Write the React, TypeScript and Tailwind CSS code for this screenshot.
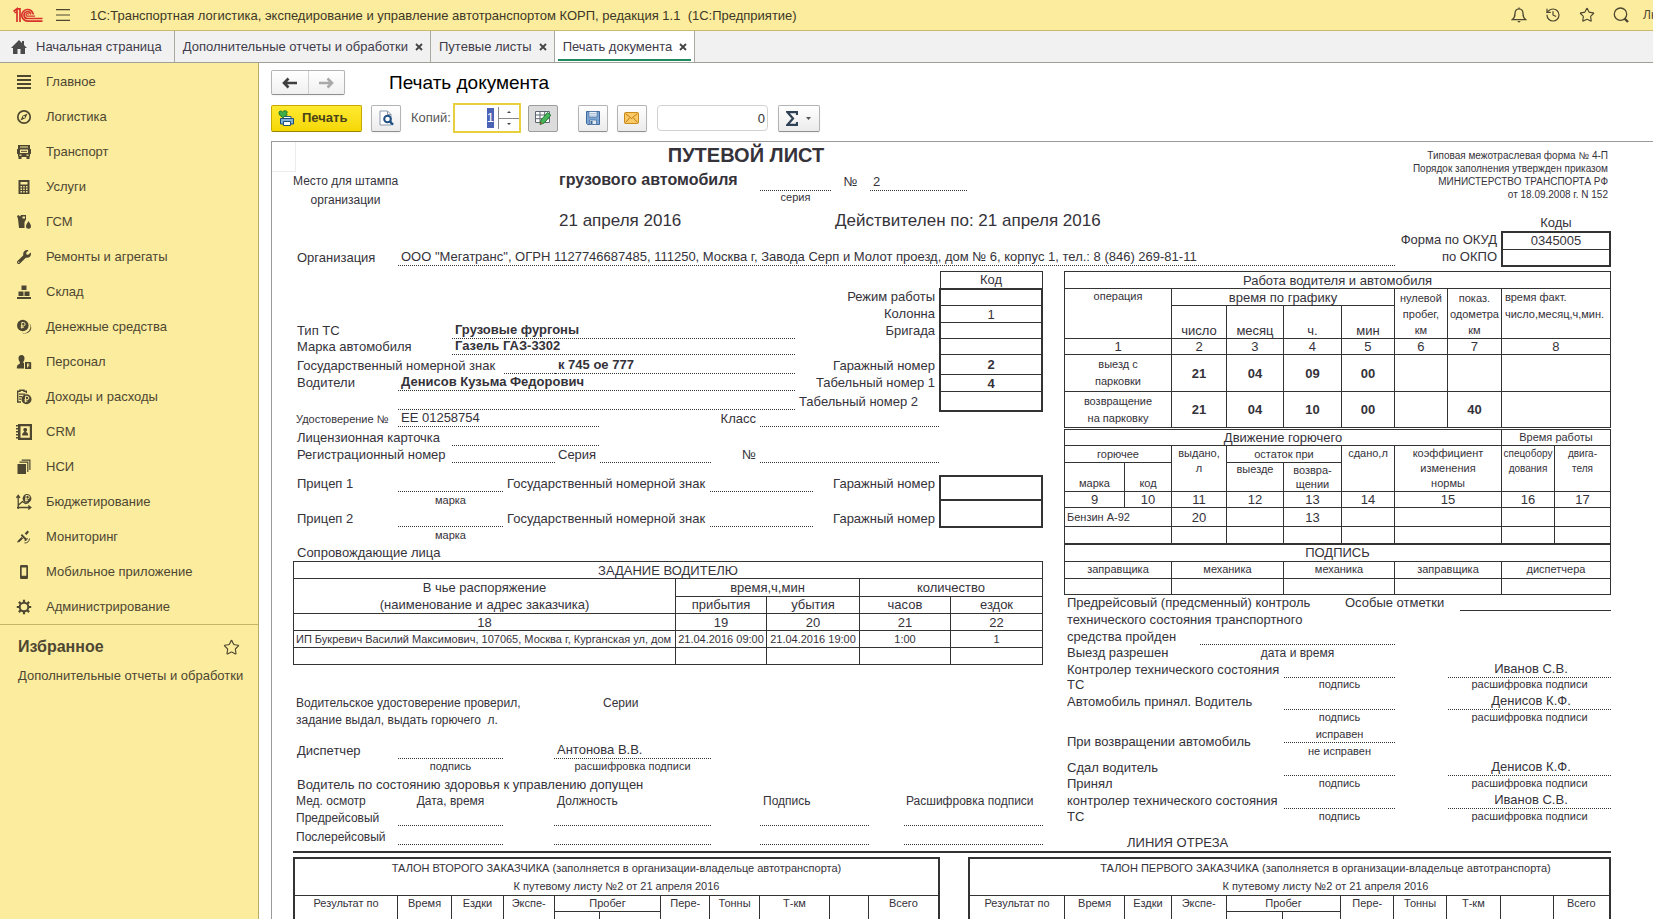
import type { ReactNode } from 'react'
import clsx from 'clsx'
import { History, Star } from 'lucide-react'
import { FaWrench } from 'react-icons/fa'

const INK = '#4d4732'

/* ---------- icons ---------- */

function Glyph({ children }: { children: ReactNode }) {
	return (
		<svg
			className="size-4 shrink-0"
			viewBox="0 0 16 16"
			fill={INK}
			stroke="none"
			aria-hidden
		>
			{children}
		</svg>
	)
}

function Ruble({ x, y, color = '#fcec9e' }: { x: number; y: number; color?: string }) {
	return (
		<path
			d={`M${x - 1} ${y + 3}v-6h1.6a1.6 1.6 0 0 1 0 3.4h-2.6M${x - 2} ${y + 1.8}h3`}
			fill="none"
			stroke={color}
			strokeWidth="1"
		/>
	)
}

const icons = {
	main: (
		<Glyph>
			<path d="M1 1h14v2H1zM1 5h14v2H1zM1 9h14v2H1zM1 13h14v2H1z" />
		</Glyph>
	),
	compass: (
		<Glyph>
			<circle cx="8" cy="8" r="6.2" fill="none" stroke={INK} strokeWidth="1.7" />
			<path d="M11.6 4.4 9.4 9.2 4.4 11.6 6.6 6.8z" />
			<circle cx="8" cy="8" r="1" fill="#fcec9e" />
		</Glyph>
	),
	truck: (
		<Glyph>
			<path
				fillRule="evenodd"
				d="M2 1h12v4h1v5h-1v2.500h-.500V15h-3v-2h-5v2h-3v-2.500H2V10H1V5h1zm2 1.500v1h8v-1zm0 3v3.500h8V5.500zm-.500 5v1.200h2v-1.200zm7 0v1.200h2v-1.200z"
			/>
			<path d="M5 6.800h6v1H5z" />
		</Glyph>
	),
	calc: (
		<Glyph>
			<path
				fillRule="evenodd"
				d="M2.500 1h11v14h-11zm2 2v2.500h7V3zm0 4v1.400H6V7zm2.700 0v1.400h1.500V7zM10 7v1.400h1.500V7zM4.500 9.500v1.400H6V9.500zm2.700 0v1.400h1.500V9.500zm2.800 0v1.400h1.500V9.500zM4.500 12v1.400H6V12zm2.700 0v1.400h1.500V12zm2.800 0v1.400h1.500V12z"
			/>
		</Glyph>
	),
	fuel: (
		<Glyph>
			<path
				fillRule="evenodd"
				d="M1 2l1.500-1L4 2.500 5 1h5v4.500L8.500 8v6H3L2 5zm5.500.500v2H9v-2z"
			/>
			<path d="M12.500 7c1.500 2.500 2.500 3.800 2.500 5.200A2.400 2.400 0 0 1 10 12.200C10 10.800 11 9.500 12.500 7z" />
		</Glyph>
	),
	wrench: <FaWrench className="size-4 shrink-0 p-px text-[#4d4732]" />,
	boxes: (
		<Glyph>
			<path d="M5.500 1.500h5v4.500h-5zM2.500 7.500h5v4.500h-5zM8.500 7.500h5v4.500h-5zM1 13h14v2H1z" />
		</Glyph>
	),
	coins: (
		<Glyph>
			<circle cx="6.800" cy="6.500" r="5.800" />
			<Ruble x={6.8} y={6.5} />
			<path d="M13.500 4.500a6.300 6.300 0 0 1-7.500 9.200c4 2.500 9.500-.700 9.200-5.200-.100-1.600-.700-3-1.700-4z" />
		</Glyph>
	),
	staff: (
		<Glyph>
			<path d="M5.500 1C7.500 1 8.600 2.300 8.500 4.500 8.400 6 8 7 7.300 7.800V9H8v5.500H.800c0-3 .700-4 3-4.800V7.800C3 7 2.600 6 2.500 4.500 2.400 2.300 3.500 1 5.500 1z" />
			<path
				fillRule="evenodd"
				d="M9 8h5.500l.700.700v6.300H9zm2 1.500v4h.9v-1.200h1.300V9.500zm.9.800h.6v1.200h-.6z"
			/>
		</Glyph>
	),
	income: (
		<Glyph>
			<path
				d="M5 13H1.700V2.200H4V1.200h4v1h2.300v2"
				fill="none"
				stroke={INK}
				strokeWidth="1.400"
			/>
			<path d="M3 4.500h6v1.200H3zM3 7h3v1.200H3zM3 9.500h2v1.200H3z" />
			<circle cx="10.500" cy="10.300" r="5" />
			<Ruble x={10.5} y={10.3} />
		</Glyph>
	),
	crm: (
		<Glyph>
			<path
				fillRule="evenodd"
				d="M2 0h14v16H2v-1.500H0V13h2v-1.500H0V10h2V8.500H0V7h2V5.500H0V4h2V2.500H0V1h2zm2.500 2.200v11.600h9.300V2.200z"
			/>
			<path d="M9.200 4a1.700 1.700 0 0 1 1 3.200v1c1.400.300 1.900 1 1.900 3.300H6.200c0-2.300.500-3 2-3.300v-1a1.700 1.700 0 0 1 1-3.200z" />
		</Glyph>
	),
	pages: (
		<Glyph>
			<path d="M1.500 5h8.500v10H1.500z" />
			<path d="M3.500 3.200h8.300V13M5.700 1.200h8.200V11" fill="none" stroke={INK} strokeWidth="1.200" />
		</Glyph>
	),
	budget: (
		<Glyph>
			<path
				d="M2.200 15V1.500M.400 3.800 2.200 1.300 4 3.800M1 13.500h13.500M12.300 11.600l2.500 1.900-2.500 1.900M2.500 11l4-3.500 3 2 3.500-1"
				fill="none"
				stroke={INK}
				strokeWidth="1.300"
			/>
			<circle cx="11" cy="4.500" r="4.400" />
			<Ruble x={11} y={4.5} />
		</Glyph>
	),
	satellite: (
		<Glyph>
			<path d="M11.500 1.500 13 3 10.500 6 8.700 4.500zM6 5l5 5-1.500 1.500L4.700 6.500zM2 11.500 5.500 8 7 9.500 3.500 13 1 13.500z" />
			<path
				d="M8.500 14a5 5 0 0 0 5-4.500M8.500 11.800A3 3 0 0 0 11.400 9"
				fill="none"
				stroke={INK}
			/>
		</Glyph>
	),
	phone: (
		<Glyph>
			<path
				fillRule="evenodd"
				d="M5.500 1h5c1 0 1.500.500 1.500 1.500v11c0 1-.500 1.500-1.500 1.500h-5C4.500 15 4 14.500 4 13.500v-11C4 1.500 4.500 1 5.500 1zm.200 2.500v8.300h4.600V3.500z"
			/>
		</Glyph>
	),
	gear: (
		<Glyph>
			<circle cx="8" cy="8" r="4.300" fill="none" stroke={INK} strokeWidth="2" />
			<path
				d="M8 .800v3M8 12.200v3M.800 8h3M12.200 8h3M2.900 2.900 5 5M11 11l2.100 2.100M13.100 2.900 11 5M5 11l-2.100 2.100"
				stroke={INK}
				strokeWidth="2.200"
			/>
		</Glyph>
	),
}

function Logo() {
	return (
		<svg
			className="h-4 w-[30px]"
			viewBox="0 0 30 16"
			fill="none"
			stroke="#d8322b"
			strokeWidth="1.700"
			role="img"
			aria-label="1С"
		>
			<path d="M.500 4.500 4 1.800V15M3.600 1.800h3.400V15M1.500 5.500h2" />
			<path d="M20.300 7.500A5.800 5.800 0 1 0 14.500 14.100H29.500" />
			<path d="M17.800 7.500A3.400 3.400 0 1 0 14.500 11.500H29.500" />
			<path d="M15.600 7.600a1.300 1.300 0 1 0-1 1.500H22" strokeWidth="1.200" />
		</svg>
	)
}

function MenuIcon() {
	return (
		<svg className="h-3 w-[14px]" viewBox="0 0 14 12" stroke="currentColor" strokeWidth="1.200" aria-hidden>
			<path d="M0 .600h14M0 6h14M0 11.400h14" />
		</svg>
	)
}

function BellIcon() {
	return (
		<svg className="size-4" viewBox="0 0 16 16" fill="none" stroke="currentColor" strokeWidth="1.300" aria-hidden>
			<path d="M8 1.800c-2.600 0-4 2-4 4.700 0 3-.800 4.800-2.800 6.200h13.600C12.800 11.300 12 9.500 12 6.500c0-2.700-1.400-4.700-4-4.700zM8 .500v1.300" />
			<path d="M6.200 14h3.600L8 15.700z" fill="currentColor" stroke="none" />
		</svg>
	)
}

function SearchIcon() {
	return (
		<svg className="size-4" viewBox="0 0 16 16" fill="none" stroke="currentColor" strokeWidth="1.300" aria-hidden>
			<circle cx="7.500" cy="7.200" r="6.200" />
			<path d="m11.500 11.500 3.500 3.500" strokeWidth="2.400" />
		</svg>
	)
}

function HomeIcon() {
	return (
		<svg className="h-[14px] w-4" viewBox="0 0 16 14" fill="#4a4a4a" aria-hidden>
			<path d="M8 0l3 3V1h2v4l3 3h-2v6h-4.500V9h-3v5H2V8H0z" />
		</svg>
	)
}

function Arrow({ color, flip }: { color: string; flip?: boolean }) {
	return (
		<svg
			className={clsx('h-3 w-[15px]', flip && '-scale-x-100')}
			viewBox="0 0 15 12"
			fill="none"
			stroke={color}
			strokeWidth="2.600"
			aria-hidden
		>
			<path d="M2 6h13M6.500 1.500 2 6l4.500 4.500" />
		</svg>
	)
}

function PrinterIcon() {
	return (
		<svg className="size-4" viewBox="0 0 16 16" aria-hidden>
			<path d="M5 6.500h8v3H5z" fill="#fff" stroke="#2b5d85" />
			<path d="M2.500 8.500h13V14h-13z" fill="#7fb2d6" stroke="#1f4e79" />
			<path d="M5.500 11.500h7v4h-7z" fill="#fff" stroke="#1f4e79" />
			<path
				d="M1 2.500C1 .800 3.500.500 4.500 2 5.500.300 8.500.500 9.500 2.200L8 3.500l1.300 1.200L5 7.500 1.500 5z"
				fill="#3fae49"
				stroke="#1d7a2b"
			/>
		</svg>
	)
}

function PreviewIcon() {
	return (
		<svg className="size-4" viewBox="0 0 16 16" fill="none" aria-hidden>
			<path d="M2 1h7.500L13 4.500V15H2z" fill="#fff" stroke="#8a99a8" />
			<path d="M9.500 1v3.500H13" stroke="#8a99a8" />
			<circle cx="9.500" cy="9" r="3.300" fill="#fff" stroke="#1f4e82" strokeWidth="2" />
			<path d="m12 11.500 3 3.300" stroke="#1f4e82" strokeWidth="2.400" />
		</svg>
	)
}

function EditTableIcon() {
	return (
		<svg className="size-[18px]" viewBox="0 0 18 18" fill="none" aria-hidden>
			<path d="M1.500 2.500h14v11h-14zM1.500 6h14M1.500 9.700h14M6 2.500v11M10.700 2.500v11" fill="#fff" stroke="#5c6670" />
			<path d="M6 15.500 7 11l6.500-7.500 3.300 2.700-6.500 7.700z" fill="#47b65a" stroke="#247a35" />
			<path d="m6 15.500.700-2.500 2 1.500z" fill="#a0522d" />
		</svg>
	)
}

function SaveIcon() {
	return (
		<svg className="size-4" viewBox="0 0 16 16" aria-hidden>
			<path d="M1.500 1.500h13v13h-12l-1-1z" fill="#7ba6d3" stroke="#41689a" />
			<path d="M4 1.500h8v5.500H4z" fill="#eef4fa" stroke="#41689a" strokeWidth=".700" />
			<path d="M4.500 10h7v4.500h-7z" fill="#dfe9f3" stroke="#41689a" strokeWidth=".700" />
			<path d="M5.500 11h2v3h-2z" fill="#41689a" />
			<path d="M5 3.500h6M5 5.200h6" stroke="#9bb6d4" strokeWidth=".800" />
		</svg>
	)
}

function MailIcon() {
	return (
		<svg className="h-3 w-[15px]" viewBox="0 0 15 12" aria-hidden>
			<rect x=".500" y=".500" width="14" height="11" rx="1" fill="#fbc965" stroke="#c98a1b" />
			<path d="m1.500 1.500 6 5 6-5M1.500 10.500l4-4.500M13.500 10.500l-4-4.500" fill="none" stroke="#b97a14" />
		</svg>
	)
}

/* ---------- application chrome ---------- */

const sections = [
	{ icon: icons.main, label: 'Главное' },
	{ icon: icons.compass, label: 'Логистика' },
	{ icon: icons.truck, label: 'Транспорт' },
	{ icon: icons.calc, label: 'Услуги' },
	{ icon: icons.fuel, label: 'ГСМ' },
	{ icon: icons.wrench, label: 'Ремонты и агрегаты' },
	{ icon: icons.boxes, label: 'Склад' },
	{ icon: icons.coins, label: 'Денежные средства' },
	{ icon: icons.staff, label: 'Персонал' },
	{ icon: icons.income, label: 'Доходы и расходы' },
	{ icon: icons.crm, label: 'CRM' },
	{ icon: icons.pages, label: 'НСИ' },
	{ icon: icons.budget, label: 'Бюджетирование' },
	{ icon: icons.satellite, label: 'Мониторинг' },
	{ icon: icons.phone, label: 'Мобильное приложение' },
	{ icon: icons.gear, label: 'Администрирование' },
]

function TitleBar() {
	return (
		<header className="flex h-[31px] shrink-0 items-center overflow-hidden border-b border-[#c9b96c] bg-[#fcec9e] pl-[13px] whitespace-nowrap text-[#4d4732]">
			<Logo />
			<button type="button" aria-label="Меню" className="ml-[13px]">
				<MenuIcon />
			</button>
			<h1 className="ml-5 pt-px text-[13px] whitespace-pre text-[#3d3926]">
				1С:Транспортная логистика, экспедирование и управление автотранспортом КОРП,
				редакция 1.1{'  '}(1С:Предприятие)
			</h1>
			<div className="ml-auto flex items-center gap-[18px]">
				<button type="button" aria-label="Оповещения">
					<BellIcon />
				</button>
				<button type="button" aria-label="История">
					<History className="size-4" strokeWidth={1.8} />
				</button>
				<button type="button" aria-label="Избранное">
					<Star className="size-4" strokeWidth={1.7} />
				</button>
				<button type="button" aria-label="Поиск">
					<SearchIcon />
				</button>
			</div>
			<span className="ml-[14px] w-[10px] text-xs">Лю</span>
		</header>
	)
}

function Tab({ label, active }: { label: string; active?: boolean }) {
	return (
		<div
			className={clsx(
				'flex border-r border-[#a9a9a0] px-[3px] pb-px',
				active && 'bg-white',
			)}
		>
			<div
				className={clsx(
					'flex items-center gap-[7px] border-b-2 pt-[3px] pr-1 pl-[5px]',
					active ? 'border-[#1f8a5f]' : 'border-transparent',
				)}
			>
				<button type="button">{label}</button>
				<button type="button" aria-label={`Закрыть ${label}`}>
					<svg className="size-2" viewBox="0 0 8 8" stroke="#444" strokeWidth="1.800" aria-hidden>
						<path d="m1 1 6 6M7 1 1 7" />
					</svg>
				</button>
			</div>
		</div>
	)
}

function Tabs() {
	return (
		<nav className="flex h-8 shrink-0 border-b border-[#a0a098] bg-[#f1f1f1] text-[13px] whitespace-nowrap text-[#403b4a]">
			<a href="#home" className="flex items-center gap-[9px] border-r border-[#a9a9a0] pr-3 pl-[11px]">
				<HomeIcon />
				Начальная страница
			</a>
			<Tab label="Дополнительные отчеты и обработки" />
			<Tab label="Путевые листы" />
			<Tab label="Печать документа" active />
		</nav>
	)
}

function Sidebar() {
	return (
		<aside className="w-[259px] shrink-0 border-r border-[#b8ac66] bg-[#fcec9e] text-[13px] text-[#4d4732]">
			<ul className="border-b border-[#c4b564] pt-px">
				{sections.map(({ icon, label }) => (
					<li key={label}>
						<a href="#section" className="flex h-[35px] items-center gap-[14px] pl-4">
							{icon}
							{label}
						</a>
					</li>
				))}
			</ul>
			<div className="flex items-center justify-between pt-[10px] pr-[18px] pl-[18px]">
				<h2 className="text-base font-bold">Избранное</h2>
				<Star className="size-[17px]" strokeWidth={1.6} />
			</div>
			<a href="#favorite" className="block pt-[7px] pl-[18px] whitespace-nowrap">
				Дополнительные отчеты и обработки
			</a>
		</aside>
	)
}

const buttonClass =
	'flex h-[27px] w-[30px] items-center justify-center rounded-xs border border-[#b4b4b4] border-b-[#8e8e8e] bg-linear-to-b from-white to-[#ebebeb] shadow-xs'

function Toolbar() {
	return (
		<div className="mt-2 flex h-[30px] items-center text-[13px] whitespace-nowrap">
			<button
				type="button"
				className="flex h-[27px] w-[91px] items-center gap-2 rounded-xs border border-[#c5a800] border-b-[#9a8400] bg-linear-to-b from-[#ffe92e] to-[#f5d800] pl-1.5 font-bold text-[#4a4318]"
			>
				<PrinterIcon />
				Печать
			</button>
			<button type="button" aria-label="Предварительный просмотр" className={clsx(buttonClass, 'ml-[9px]')}>
				<PreviewIcon />
			</button>
			<label htmlFor="copies" className="ml-[10px] text-[#555]">
				Копий:
			</label>
			<div className="ml-[2px] flex h-[30px] w-[68px] border-2 border-[#e8cf3e] bg-white">
				<input
					id="copies"
					autoFocus
					defaultValue="1"
					onFocus={(e) => e.target.select()}
					className="min-w-0 flex-1 pr-1 text-right text-[#333] outline-none selection:bg-[#4c62b4] selection:text-white"
				/>
				<div className="my-[2px] flex w-[21px] flex-col border-l border-[#888]">
					<button type="button" aria-label="Больше" className="flex flex-1 items-center justify-center border-b border-[#888]">
						<svg className="h-[2px] w-1" viewBox="0 0 4 2" fill="#444" aria-hidden>
							<path d="M2 0l2 2H0z" />
						</svg>
					</button>
					<button type="button" aria-label="Меньше" className="flex flex-1 items-center justify-center">
						<svg className="h-[2px] w-1" viewBox="0 0 4 2" fill="#444" aria-hidden>
							<path d="M2 2l2-2H0z" />
						</svg>
					</button>
				</div>
			</div>
			<button
				type="button"
				aria-pressed
				aria-label="Редактирование"
				className="ml-[7px] flex h-[27px] w-[30px] items-center justify-center rounded-xs border border-[#9c9c9c] bg-[#dcdcdc]"
			>
				<EditTableIcon />
			</button>
			<button type="button" aria-label="Сохранить" className={clsx(buttonClass, 'ml-5')}>
				<SaveIcon />
			</button>
			<button type="button" aria-label="Отправить по почте" className={clsx(buttonClass, 'ml-[9px]')}>
				<MailIcon />
			</button>
			<input
				aria-label="Сумма"
				defaultValue="0"
				className="ml-[10px] h-[26px] w-[111px] rounded-sm border border-[#d2d2d2] pr-[2px] text-right text-[#333]"
			/>
			<button
				type="button"
				aria-label="Функция"
				className="ml-[10px] flex h-[27px] w-[42px] items-center justify-center gap-2 rounded-xs border border-[#b4b4b4] border-b-[#8e8e8e] bg-linear-to-b from-white to-[#ebebeb] shadow-xs"
			>
				<svg className="h-[15px] w-3" viewBox="0 0 12 15" fill="none" stroke="#2f4154" strokeWidth="2.200" aria-hidden>
					<path d="M11 4V1.200H1.500L7 7.500l-5.500 6.300H11V11" />
				</svg>
				<svg className="h-[3px] w-[5px]" viewBox="0 0 5 3" fill="#555" aria-hidden>
					<path d="M0 0h5L2.500 3z" />
				</svg>
			</button>
		</div>
	)
}

/* ---------- printed form ---------- */

type CellProps = { children?: ReactNode; className?: string }

// A row of the form, its tracks are set by className
function Row({ children, className }: CellProps) {
	return <div className={clsx('grid leading-4 whitespace-nowrap', className)}>{children}</div>
}

function Label({ children, className }: CellProps) {
	return <div className={clsx('flex min-w-0 items-end', className ?? 'pl-1')}>{children}</div>
}

function Line({ children, className }: CellProps) {
	return (
		<div
			className={clsx(
				'flex min-w-0 items-end border-b border-dotted border-[#333] pl-[3px]',
				className,
			)}
		>
			{children}
		</div>
	)
}

function Note({ children, className }: CellProps) {
	return (
		<div className={clsx('flex min-w-0 items-start justify-center text-[11px] leading-[15px]', className)}>
			{children}
		</div>
	)
}

function Cols({ widths }: { widths: number[] }) {
	const total = widths.reduce((sum, w) => sum + w, 0)

	return (
		<colgroup>
			{widths.map((w, i) => (
				<col key={i} style={{ width: `${(w / total) * 100}%` }} />
			))}
		</colgroup>
	)
}

const tableClass =
	'w-full table-fixed border-collapse text-center leading-[15px] whitespace-nowrap [&_td]:border [&_td]:border-[#333] [&_td]:p-0 [&_th]:border [&_th]:border-[#333] [&_th]:p-0 [&_th]:font-normal'

function FormHeader() {
	return (
		<div className="grid grid-cols-[1102fr_216fr]">
			<div className="min-w-0">
				<div className="grid h-[106px] grid-cols-[105fr_156fr_841fr]">
					<p className="min-w-0 pt-[30px] text-center text-xs leading-[19px] whitespace-nowrap">
						Место для штампа
						<br />
						организации
					</p>
					<span />
					<div className="min-w-0">
						<div className="grid grid-cols-[384fr_457fr]">
							<h3 className="text-center text-xl leading-[27px] font-bold whitespace-nowrap">
								ПУТЕВОЙ ЛИСТ
							</h3>
						</div>
						<Row className="h-[21px] grid-cols-[206fr_71fr_39fr_97fr_428fr]">
							<div className="min-w-0 pl-[5px] text-base leading-[22px] font-bold">грузового автомобиля</div>
							<Line />
							<Label className="justify-center pb-px">№</Label>
							<Line>2</Line>
						</Row>
						<Row className="h-[15px] grid-cols-[206fr_71fr_564fr]">
							<span />
							<Note>серия</Note>
						</Row>
						<Row className="mt-1 grid-cols-[278fr_563fr] text-[17px]">
							<span className="pl-[5px] leading-6">21 апреля 2016</span>
							<span className="pl-[3px] leading-6">Действителен по: 21 апреля 2016</span>
						</Row>
					</div>
				</div>
				<Row className="h-[18px] grid-cols-[105fr_997fr]">
					<Label>Организация</Label>
					<Line>
						ООО "Мегатранс", ОГРН 1127746687485, 111250, Москва г, Завода Серп и Молот
						проезд, дом № 6, корпус 1, тел.: 8 (846) 269-81-11
					</Line>
				</Row>
			</div>

			<div className="min-w-0">
				<p className="h-[73px] pt-[7px] pr-[3px] text-right text-[10px] leading-[13px] whitespace-nowrap">
					Типовая межотраслевая форма № 4-П
					<br />
					Порядок заполнения утвержден приказом
					<br />
					МИНИСТЕРСТВО ТРАНСПОРТА РФ
					<br />
					от 18.09.2008 г. N 152
				</p>
				<div className="grid grid-cols-[106fr_110fr]">
					<div className="pt-4 pr-1 text-right leading-[17px] whitespace-nowrap">
						Форма по ОКУД
						<br />
						по ОКПО
					</div>
					<div className="text-center">
						<div className="leading-4">Коды</div>
						<table className={clsx(tableClass, 'border-2 border-[#333]')}>
							<tbody>
								<tr className="h-[17px]">
									<td>0345005</td>
								</tr>
								<tr className="h-[17px]">
									<td />
								</tr>
							</tbody>
						</table>
					</div>
				</div>
			</div>
		</div>
	)
}

function CodesTable() {
	return (
		<table className={tableClass}>
			<thead>
				<tr className="h-[17px]">
					<th>Код</th>
				</tr>
			</thead>
			<tbody className="border-2 border-[#333]">
				<tr className="h-[17px]">
					<td />
				</tr>
				<tr className="h-[17px]">
					<td>1</td>
				</tr>
				<tr className="h-4">
					<td />
				</tr>
				<tr className="h-4">
					<td />
				</tr>
				<tr className="h-5 font-bold">
					<td>2</td>
				</tr>
				<tr className="h-[17px] font-bold">
					<td>4</td>
				</tr>
				<tr className="h-[19px]">
					<td />
				</tr>
			</tbody>
		</table>
	)
}

function Trailer({ number }: { number: number }) {
	return (
		<>
			<Row className="h-[17px] grid-cols-[105fr_105fr_207fr_103fr_126fr]">
				<Label>Прицеп {number}</Label>
				<Line />
				<Label>Государственный номерной знак</Label>
				<Line />
				<Label className="justify-end pr-1">Гаражный номер</Label>
			</Row>
			<Row className="h-[18px] grid-cols-[105fr_105fr_436fr]">
				<span />
				<Note className="pt-px">марка</Note>
			</Row>
		</>
	)
}

function VehicleFields() {
	return (
		<div className="grid grid-cols-[646fr_104fr]">
			<div className="min-w-0">
				<Row className="h-[34px]">
					<Label className="justify-end pr-1">Режим работы</Label>
				</Row>
				<Row className="h-[17px]">
					<Label className="justify-end pr-1">Колонна</Label>
				</Row>
				<Row className="h-4 grid-cols-[159fr_343fr_144fr]">
					<Label>Тип ТС</Label>
					<Line className="font-bold">Грузовые фургоны</Line>
					<Label className="justify-end pr-1">Бригада</Label>
				</Row>
				<Row className="h-4 grid-cols-[159fr_343fr_144fr]">
					<Label>Марка автомобиля</Label>
					<Line className="font-bold">Газель ГАЗ-3302</Line>
				</Row>
				<Row className="h-5 grid-cols-[211fr_51fr_240fr_144fr]">
					<Label>Государственный номерной знак</Label>
					<Line />
					<Line className="font-bold">к 745 ое 777</Line>
					<Label className="justify-end pr-1">Гаражный номер</Label>
				</Row>
				<Row className="h-[17px] grid-cols-[105fr_397fr_144fr]">
					<Label>Водители</Label>
					<Line className="font-bold">Денисов Кузьма Федорович</Line>
					<Label className="justify-end pr-1">Табельный номер 1</Label>
				</Row>
				<Row className="h-[19px] grid-cols-[105fr_397fr_144fr]">
					<span />
					<Line />
					<Label>Табельный номер 2</Label>
				</Row>
				<Row className="h-[17px] grid-cols-[105fr_201fr_161fr_179fr]">
					<Label className="pl-[3px] text-[11px]">Удостоверение №</Label>
					<Line>ЕЕ 01258754</Line>
					<Label className="justify-end pr-1">Класс</Label>
					<Line />
				</Row>
				<Row className="h-[19px] grid-cols-[159fr_147fr_340fr]">
					<Label>Лицензионная карточка</Label>
					<Line />
				</Row>
				<Row className="h-[17px] grid-cols-[159fr_103fr_45fr_111fr_49fr_179fr]">
					<Label>Регистрационный номер</Label>
					<Line />
					<Label className="pl-[3px]">Серия</Label>
					<Line />
					<Label className="justify-end pr-1">№</Label>
					<Line />
				</Row>
				<div className="pt-3">
					<Trailer number={1} />
					<Trailer number={2} />
				</div>
				<Row className="h-4">
					<Label>Сопровождающие лица</Label>
				</Row>
			</div>
			<div className="min-w-0">
				<CodesTable />
				<table className={clsx(tableClass, 'mt-[63px] [&_td]:border-2')}>
					<tbody>
						<tr className="h-6">
							<td />
						</tr>
						<tr className="h-[27px]">
							<td />
						</tr>
					</tbody>
				</table>
			</div>
		</div>
	)
}

function DriverTask() {
	return (
		<table className={tableClass}>
			<Cols widths={[382, 91, 93, 91, 92]} />
			<thead>
				<tr className="h-[17px]">
					<th colSpan={5}>ЗАДАНИЕ ВОДИТЕЛЮ</th>
				</tr>
				<tr className="h-[17px]">
					<th rowSpan={2} className="leading-[17px]">
						В чье распоряжение
						<br />
						(наименование и адрес заказчика)
					</th>
					<th colSpan={2}>время,ч,мин</th>
					<th colSpan={2}>количество</th>
				</tr>
				<tr className="h-[17px]">
					<th>прибытия</th>
					<th>убытия</th>
					<th>часов</th>
					<th>ездок</th>
				</tr>
			</thead>
			<tbody>
				<tr className="h-[17px]">
					<td>18</td>
					<td>19</td>
					<td>20</td>
					<td>21</td>
					<td>22</td>
				</tr>
				<tr className="h-[17px] text-[11px]">
					<td>
						<div className="overflow-hidden pl-[2px] text-left">
							ИП Букревич Василий Максимович, 107065, Москва г, Курганская ул, дом
						</div>
					</td>
					<td>21.04.2016 09:00</td>
					<td>21.04.2016 19:00</td>
					<td>1:00</td>
					<td>1</td>
				</tr>
				<tr className="h-[17px]">
					<td />
					<td />
					<td />
					<td />
					<td />
				</tr>
			</tbody>
		</table>
	)
}

function MedicalRow({ label, className }: { label: string; className: string }) {
	return (
		<Row className={clsx('grid-cols-[105fr_105fr_51fr_157fr_49fr_109fr_35fr_139fr]', className)}>
			<Label className="pl-[3px] text-xs leading-4">{label}</Label>
			<Line />
			<span />
			<Line />
			<span />
			<Line />
			<span />
			<Line />
		</Row>
	)
}

function DispatcherFields() {
	return (
		<div className="pt-[30px]">
			<Row className="grid-cols-[310fr_440fr] text-xs leading-[17px]">
				<Label className="pl-[3px]">
					<span className="leading-[17px]">
						Водительское удостоверение проверил,
						<br />
						задание выдал, выдать горючего&nbsp; л.
					</span>
				</Label>
				<span className="leading-[17px]">Серии</span>
			</Row>
			<Row className="h-[30px] grid-cols-[105fr_105fr_51fr_157fr_332fr]">
				<Label>Диспетчер</Label>
				<Line />
				<span />
				<Line>Антонова В.В.</Line>
			</Row>
			<Row className="h-[17px] grid-cols-[105fr_105fr_51fr_157fr_332fr]">
				<span />
				<Note>подпись</Note>
				<span />
				<Note>расшифровка подписи</Note>
			</Row>
			<Row className="h-[17px]">
				<Label>Водитель по состоянию здоровья к управлению допущен</Label>
			</Row>
			<Row className="h-4 grid-cols-[105fr_105fr_51fr_206fr_144fr_139fr] text-xs leading-4">
				<Label className="pl-[3px]">Мед. осмотр</Label>
				<Label className="justify-center">Дата, время</Label>
				<span />
				<Label className="pl-[3px]">Должность</Label>
				<Label className="pl-[3px]">Подпись</Label>
				<Label className="pl-[2px]">Расшифровка подписи</Label>
			</Row>
			<MedicalRow label="Предрейсовый" className="h-[17px]" />
			<MedicalRow label="Послерейсовый" className="h-[19px]" />
		</div>
	)
}

function DrivingTable() {
	return (
		<table className={tableClass}>
			<Cols widths={[107, 55, 57, 58, 53, 53, 54, 109]} />
			<thead>
				<tr className="h-[17px]">
					<th colSpan={8}>Работа водителя и автомобиля</th>
				</tr>
				<tr className="h-[17px]">
					<th rowSpan={2} className="align-top text-[11px]">
						операция
					</th>
					<th colSpan={4}>время по графику</th>
					<th rowSpan={2} className="text-[11px] leading-4">
						нулевой
						<br />
						пробег,
						<br />
						км
					</th>
					<th rowSpan={2} className="text-[11px] leading-4">
						показ.
						<br />
						одометра
						<br />
						км
					</th>
					<th rowSpan={2} className="text-left align-top text-[11px] leading-[17px]">
						<div className="pl-[3px]">
							время факт.
							<br />
							число,месяц,ч,мин.
						</div>
					</th>
				</tr>
				<tr className="h-[33px] align-bottom">
					<th>число</th>
					<th>месяц</th>
					<th>ч.</th>
					<th>мин</th>
				</tr>
			</thead>
			<tbody>
				<tr className="h-4">
					{[1, 2, 3, 4, 5, 6, 7, 8].map((n) => (
						<td key={n}>{n}</td>
					))}
				</tr>
				<tr className="h-[37px] font-bold">
					<td className="text-[11px] leading-[17px] font-normal">
						выезд с
						<br />
						парковки
					</td>
					<td>21</td>
					<td>04</td>
					<td>09</td>
					<td>00</td>
					<td />
					<td />
					<td />
				</tr>
				<tr className="h-9 font-bold">
					<td className="text-[11px] leading-[17px] font-normal">
						возвращение
						<br />
						на парковку
					</td>
					<td>21</td>
					<td>04</td>
					<td>10</td>
					<td>00</td>
					<td />
					<td>40</td>
					<td />
				</tr>
			</tbody>
		</table>
	)
}

function FuelTable() {
	return (
		<table className={clsx(tableClass, 'mt-px')}>
			<Cols widths={[60, 47, 55, 57, 58, 53, 107, 53, 56]} />
			<thead>
				<tr className="h-4">
					<th colSpan={7}>Движение горючего</th>
					<th colSpan={2} className="text-[11px]">
						Время работы
					</th>
				</tr>
				<tr className="h-[17px] text-[11px]">
					<th colSpan={2}>горючее</th>
					<th rowSpan={2} className="align-top">
						выдано,
						<br />л
					</th>
					<th colSpan={2}>остаток при</th>
					<th rowSpan={2} className="align-top">
						сдано,л
					</th>
					<th rowSpan={2} className="align-top">
						коэффициент
						<br />
						изменения
						<br />
						нормы
					</th>
					<th rowSpan={2} className="align-top text-[10px]">
						спецобору
						<br />
						дования
					</th>
					<th rowSpan={2} className="align-top text-[10px]">
						двига-
						<br />
						теля
					</th>
				</tr>
				<tr className="h-[29px] text-[11px]">
					<th className="align-bottom">марка</th>
					<th className="align-bottom">код</th>
					<th className="align-top leading-3">выезде</th>
					<th className="leading-[14px]">
						возвра-
						<br />
						щении
					</th>
				</tr>
			</thead>
			<tbody>
				<tr className="h-4">
					{[9, 10, 11, 12, 13, 14, 15, 16, 17].map((n) => (
						<td key={n}>{n}</td>
					))}
				</tr>
				<tr className="h-[19px]">
					<td colSpan={2}>
						<div className="pl-[2px] text-left text-[11px]">Бензин А-92</div>
					</td>
					<td>20</td>
					<td />
					<td>13</td>
					<td />
					<td />
					<td />
					<td />
				</tr>
				<tr className="h-[17px]">
					<td colSpan={2} />
					<td />
					<td />
					<td />
					<td />
					<td />
					<td />
					<td />
				</tr>
			</tbody>
		</table>
	)
}

function SignatureTable() {
	return (
		<table className={clsx(tableClass, '-mt-px border-t-2 border-[#333]')}>
			<Cols widths={[107, 112, 111, 107, 109]} />
			<thead>
				<tr className="h-[17px]">
					<th colSpan={5}>ПОДПИСЬ</th>
				</tr>
				<tr className="h-[17px] text-[11px]">
					<th>заправщика</th>
					<th>механика</th>
					<th>механика</th>
					<th>заправщика</th>
					<th>диспетчера</th>
				</tr>
			</thead>
			<tbody>
				<tr className="h-4">
					<td />
					<td />
					<td />
					<td />
					<td />
				</tr>
			</tbody>
		</table>
	)
}

type SignProps = { label: string; below?: string; name: string; short?: boolean }

function Signature({ label, below, name, short }: SignProps) {
	return (
		<>
			<Row
				className={clsx(
					'grid-cols-[220fr_111fr_53fr_163fr]',
					short ? 'h-4' : 'h-[17px]',
				)}
			>
				<Label className="pl-[3px]">{label}</Label>
				<Line />
				<span />
				<Line className="justify-center">{name}</Line>
			</Row>
			<Row className="h-4 grid-cols-[220fr_111fr_53fr_163fr]">
				<Label className="pl-[3px]">{below}</Label>
				<Note>подпись</Note>
				<span />
				<Note>расшифровка подписи</Note>
			</Row>
		</>
	)
}

function ControlFields() {
	return (
		<div>
			<Row className="h-4 grid-cols-[280fr_116fr_151fr]">
				<Label className="pl-[3px]">Предрейсовый (предсменный) контроль</Label>
				<Label className="pl-px">Особые отметки</Label>
				<div className="border-b border-[#333]" />
			</Row>
			<Row className="h-[17px]">
				<Label className="pl-[3px]">технического состояния транспортного</Label>
			</Row>
			<Row className="h-[17px] grid-cols-[136fr_195fr_216fr]">
				<Label className="pl-[3px]">средства пройден</Label>
				<Line />
			</Row>
			<Row className="h-4 grid-cols-[136fr_195fr_216fr]">
				<Label className="pl-[3px]">Выезд разрешен</Label>
				<Label className="justify-center text-xs leading-4">дата и время</Label>
			</Row>
			<Signature label="Контролер технического состояния" below="ТС" name="Иванов С.В." short />
			<Signature label="Автомобиль принял. Водитель" name="Денисов К.Ф." />
			<div className="grid grid-cols-[220fr_111fr_216fr] items-center">
				<span className="min-w-0 pl-[3px] whitespace-nowrap">При возвращении автомобиль</span>
				<div className="min-w-0 text-center text-[11px] leading-4">
					<div className="border-b border-dotted border-[#333]">исправен</div>
					не исправен
				</div>
			</div>
			<Signature label="Сдал водитель" below="Принял" name="Денисов К.Ф." />
			<Signature label="контролер технического состояния" below="ТС" name="Иванов С.В." />
			<Row className="mt-[10px] grid-cols-[60fr_487fr]">
				<span />
				<Label className="pl-[3px]">ЛИНИЯ ОТРЕЗА</Label>
			</Row>
		</div>
	)
}

type CouponProps = { title: string; widths: number[]; indent?: string }

function Coupon({ title, widths, indent }: CouponProps) {
	return (
		<table className={clsx(tableClass, 'border-2 border-[#333] text-[11px]')}>
			<Cols widths={widths} />
			<thead>
				<tr className="h-[37px]">
					<th colSpan={11} className="leading-[18px]">
						<div className={indent}>
							{title} (заполняется в организации-владельце автотранспорта)
							<br />
							К путевому листу №2 от 21 апреля 2016
						</div>
					</th>
				</tr>
				<tr className="h-4">
					<th className="border-b-0!">Результат по</th>
					<th className="border-b-0!">Время</th>
					<th className="border-b-0!">Ездки</th>
					<th className="border-b-0!">Экспе-</th>
					<th colSpan={2}>Пробег</th>
					<th className="border-b-0!">Пере-</th>
					<th className="border-b-0!">Тонны</th>
					<th className="border-b-0!">Т-км</th>
					<th className="border-b-0!" />
					<th className="border-b-0!">Всего</th>
				</tr>
			</thead>
			<tbody>
				<tr className="h-8">
					{widths.map((_, i) => (
						<td key={i} className={clsx(i !== 4 && i !== 5 && 'border-t-0!')} />
					))}
				</tr>
			</tbody>
		</table>
	)
}

function Sheet() {
	return (
		<div className="relative mt-2 min-h-0 flex-1 overflow-hidden border-t border-l border-[#9a9a9a] bg-white pr-[42px] pl-[21px] text-[13px] text-[#35323a]">
			<div className="absolute top-0 left-0 h-[30px] w-6 border-r border-b border-[#ececec]" />
			<FormHeader />
			<div className="mt-1 grid grid-cols-[750fr_547fr] gap-x-[21px]">
				<div className="min-w-0">
					<VehicleFields />
					<DriverTask />
					<DispatcherFields />
				</div>
				<div className="min-w-0">
					<DrivingTable />
					<FuelTable />
					<SignatureTable />
					<ControlFields />
				</div>
			</div>
			<hr className="border-t-2 border-[#333]" />
			<div className="mt-1 grid grid-cols-[647fr_643fr] gap-x-7">
				<Coupon
					title="ТАЛОН ВТОРОГО ЗАКАЗЧИКА"
					widths={[104, 54, 52, 51, 45, 62, 49, 50, 70, 39, 71]}
				/>
				<Coupon
					title="ТАЛОН ПЕРВОГО ЗАКАЗЧИКА"
					widths={[96, 60, 47, 55, 57, 58, 53, 53, 54, 53, 57]}
					indent="pl-[72px]"
				/>
			</div>
		</div>
	)
}

export default function App() {
	return (
		<div className="flex h-screen flex-col overflow-hidden bg-white font-['Liberation_Sans',Arial,sans-serif]">
			<TitleBar />
			<Tabs />
			<div className="flex min-h-0 flex-1">
				<Sidebar />
				<main className="flex min-w-0 flex-1 flex-col pt-[7px] pl-3">
					<div className="flex shrink-0 items-center">
						<div className="flex h-[25px] w-[74px] rounded-xs border border-[#b4b4b4] border-b-[#8e8e8e] bg-linear-to-b from-white to-[#f0f0f0] shadow-xs">
							<button type="button" aria-label="Назад" className="flex flex-1 items-center justify-center border-r border-[#d0d0d0]">
								<Arrow color="#3f3f3f" />
							</button>
							<button type="button" aria-label="Вперед" className="flex flex-1 items-center justify-center">
								<Arrow color="#a9a9a9" flip />
							</button>
						</div>
						<h2 className="ml-11 text-[19px] leading-6 text-black">Печать документа</h2>
					</div>
					<Toolbar />
					<Sheet />
				</main>
			</div>
		</div>
	)
}
